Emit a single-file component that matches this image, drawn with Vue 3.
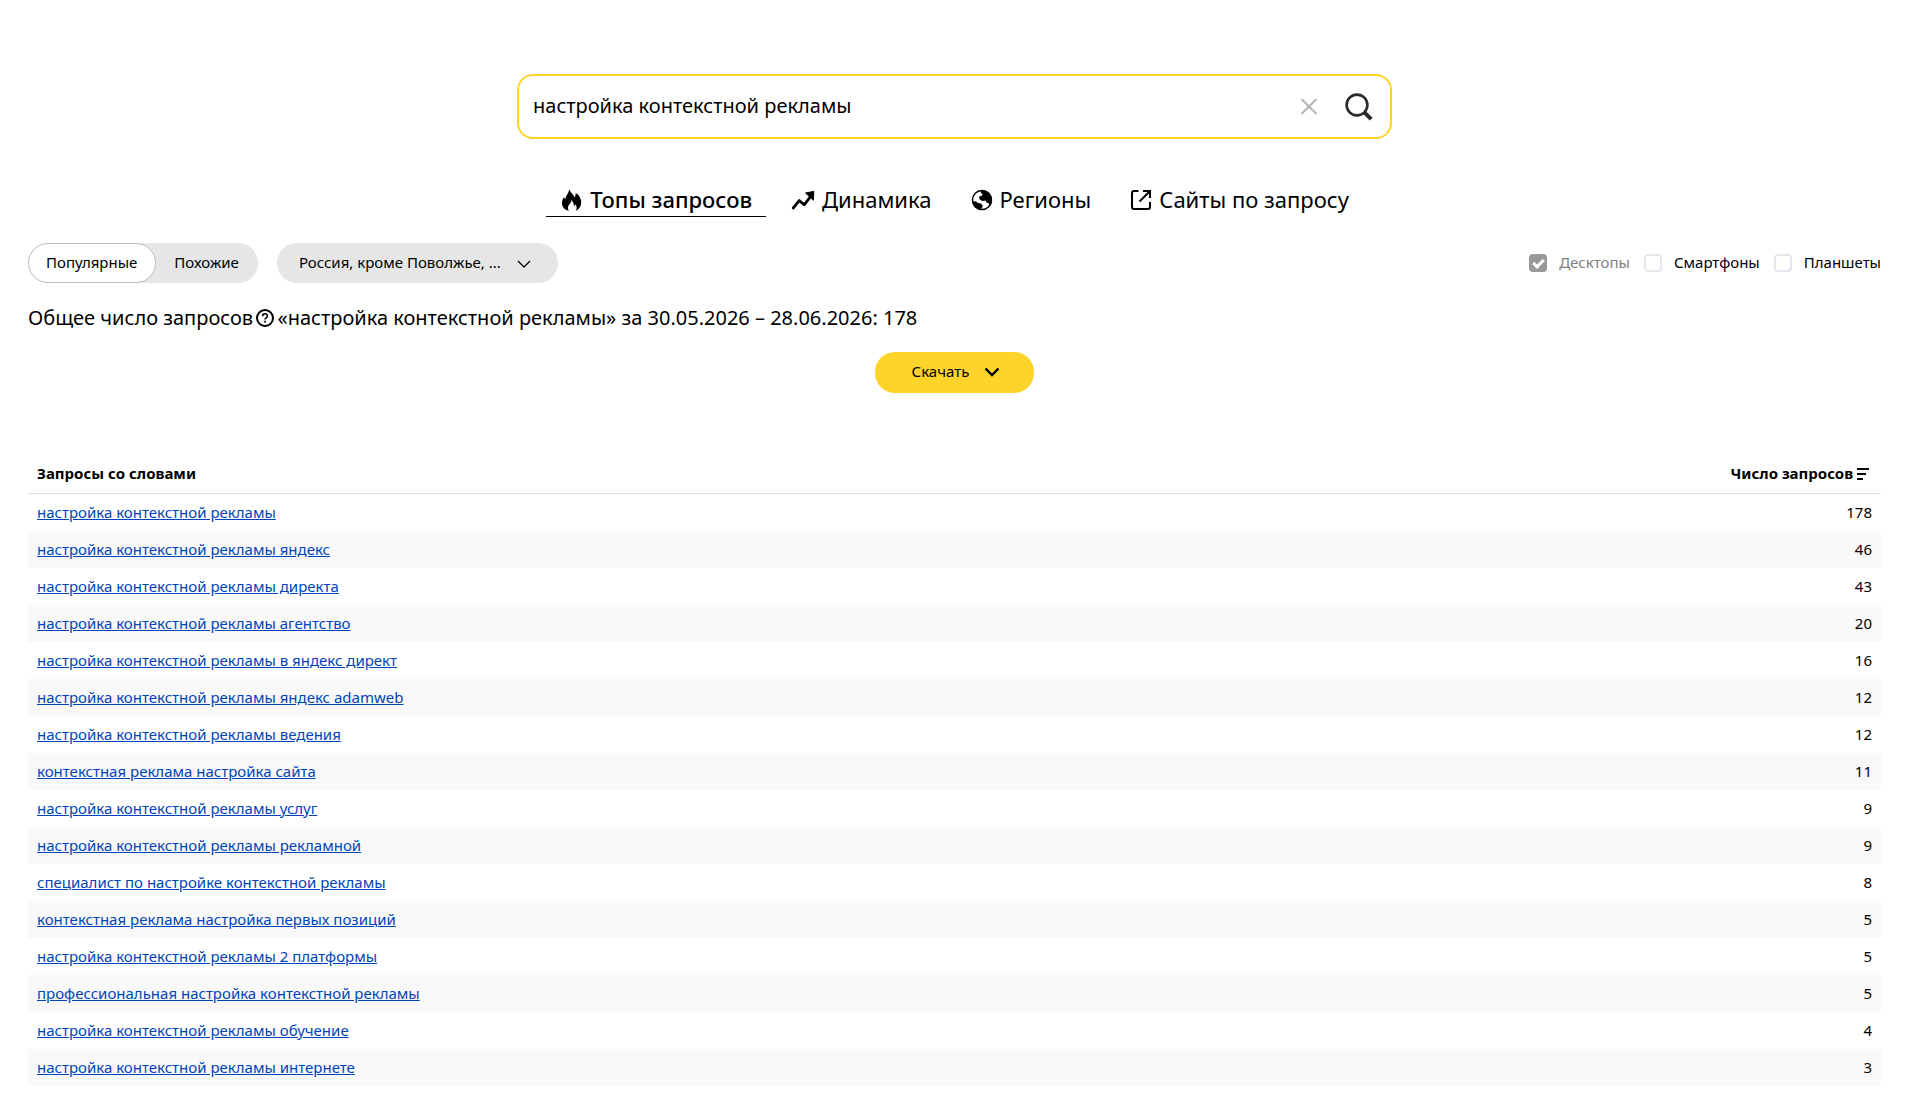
<template>
  <main class="page">
    <form class="search" role="search" @submit.prevent>
      <input v-model="query" class="search-input" type="text" aria-label="Запрос">
      <button class="icon-button clear" type="button" aria-label="Очистить" @click="query = ''">
        <svg width="16" height="16" viewBox="0 0 16 16">
          <path d="M.5 0l15 15M15.500 0L.5 15" fill="none" stroke="#b3b3b3" stroke-width="2" />
        </svg>
      </button>
      <button class="icon-button" type="submit" aria-label="Найти">
        <svg width="28" height="28" viewBox="0 0 28 28" fill="none" stroke="#2b2b2b">
          <circle cx="12" cy="12" r="10.4" stroke-width="2.6" />
          <path d="M19.8 19.8l6.4 6.4" stroke-width="4" />
        </svg>
      </button>
    </form>

    <nav class="tabs">
      <a
        v-for="tab in tabs"
        :key="tab.id"
        href="#"
        class="tab"
        :class="{ active: tab.id === activeTab }"
        @click.prevent="activeTab = tab.id"
      >
        <svg v-if="tab.id === 'top'" class="tab-icon" viewBox="0 0 22 22">
          <path d="M8.2 0C8.800 3 12.400 4.800 13.600 8.400c.9-.9 1.200-2.400 1-4.400 3.400 1.400 5.600 5.600 5.600 9.600 0 3.800-2 7-5.600 8.400 1.600-2.400 1.300-4.900-.1-6.700-.5 1-1 1.500-1.700 1.800.2-2.300-.7-4.300-2.400-6.100-.1 2.200-1.200 3.300-2.200 4.600-1.500 2-1.700 4.300-.3 6.400C3.300 20.800 1 17.900 1 14.100c0-2.700 1-4.400 2.100-6.100.2 1 .6 1.600 1.300 2.200C4.600 6.200 8.200 4.200 8.200 0z" />
        </svg>
        <svg v-else-if="tab.id === 'dynamics'" class="tab-icon wide" viewBox="0 0 24 22">
          <path d="M2.200 19l6-7.400 5 4.200L20 6.800" fill="none" stroke="#000" stroke-width="2.800" stroke-linecap="round" stroke-linejoin="round" />
          <path d="M14.600 4L22.800 2.400l-.4 8.800z" stroke="#000" stroke-linejoin="round" />
        </svg>
        <svg v-else-if="tab.id === 'regions'" class="tab-icon" viewBox="0 0 22 22">
          <circle cx="11" cy="11" r="9.500" fill="none" stroke="#000" stroke-width="1.500" />
          <path d="M10.200 1.200c6.200-.4 10.800 4 10.800 9.800 0 2.600-.9 4.800-2.400 6.500l-.9-3.200-2.500-.9-.5-1.900-3.200.5-2.500-1.200-1.100-2.200 1-1.600 2.100-.3.600-1.800-1.900-.8z" />
          <path d="M1.200 12.400l3.800-.2 1.400 1.600 3.400.6 1.900 2-.4 2.200-2 1.800C5.200 20.400 1.800 17 1.200 12.400z" />
        </svg>
        <svg v-else class="tab-icon" viewBox="0 0 22 22" fill="none" stroke="#000" stroke-width="2">
          <path d="M8.500 2H4a2 2 0 0 0-2 2v14a2 2 0 0 0 2 2h14a2 2 0 0 0 2-2v-5M13 2h7v7M20 2L9.500 12.500" />
        </svg>
        {{ tab.title }}
      </a>
    </nav>

    <div class="filters">
      <div class="switcher" role="radiogroup" aria-label="Тип запросов">
        <label v-for="mode in modes" :key="mode" class="mode" :class="{ checked: mode === activeMode }">
          <input v-model="activeMode" type="radio" name="mode" :value="mode">
          {{ mode }}
        </label>
      </div>

      <div class="region">
        <select v-model="region" class="region-select" aria-label="Регион">
          <option>Россия, кроме Поволжье, ...</option>
        </select>
        <svg class="region-arrow" width="14" height="8" viewBox="0 0 14 8">
          <path d="M1 1l6 6 6-6" fill="none" stroke="#000" stroke-width="1.300" />
        </svg>
      </div>

      <div class="devices">
        <label v-for="device in devices" :key="device.title" class="device" :class="{ disabled: device.disabled }">
          <input v-model="device.checked" type="checkbox" :disabled="device.disabled">
          <span>{{ device.title }}</span>
        </label>
      </div>
    </div>

    <p class="total">
      Общее число запросов
      <svg class="hint" width="18" height="18" viewBox="0 0 18 18" fill="none" stroke="#000">
        <circle cx="9" cy="9" r="8" stroke-width="2" />
        <path d="M6.600 7.200c0-1.500 1-2.400 2.400-2.400s2.400.9 2.400 2.100c0 1.600-2.300 1.700-2.300 3.500" stroke-width="1.600" />
        <path d="M9.100 11.700v1.700" stroke-width="1.800" />
      </svg>
      «настройка контекстной рекламы» за 30.05.2026 – 28.06.2026: 178
    </p>

    <button class="download" type="button">
      <span>Скачать</span>
      <svg width="16" height="10" viewBox="0 0 16 10">
        <path d="M1.500 1.500L8 8l6.500-6.500" fill="none" stroke="#000" stroke-width="2.400" />
      </svg>
    </button>

    <table class="queries">
      <thead>
        <tr>
          <th>Запросы со словами</th>
          <th class="count">
            Число запросов
            <svg class="sort" width="12" height="12" viewBox="0 0 12 12">
              <path d="M0 1h12M0 6h9M0 11h6" stroke="#000" stroke-width="2" />
            </svg>
          </th>
        </tr>
      </thead>
      <tbody>
        <tr v-for="row in rows" :key="row.text">
          <td><a href="#" @click.prevent="query = row.text">{{ row.text }}</a></td>
          <td class="count">{{ row.count }}</td>
        </tr>
      </tbody>
    </table>
  </main>
</template>

<script setup>
import { ref } from 'vue'

const query = ref('настройка контекстной рекламы')
const activeTab = ref('top')
const activeMode = ref('Популярные')
const region = ref('Россия, кроме Поволжье, ...')

const tabs = [
  { id: 'top', title: 'Топы запросов' },
  { id: 'dynamics', title: 'Динамика' },
  { id: 'regions', title: 'Регионы' },
  { id: 'sites', title: 'Сайты по запросу' }
]

const modes = ['Популярные', 'Похожие']

const devices = ref([
  { title: 'Десктопы', checked: true, disabled: true },
  { title: 'Смартфоны', checked: false, disabled: false },
  { title: 'Планшеты', checked: false, disabled: false }
])

const rows = [
  { text: 'настройка контекстной рекламы', count: 178 },
  { text: 'настройка контекстной рекламы яндекс', count: 46 },
  { text: 'настройка контекстной рекламы директа', count: 43 },
  { text: 'настройка контекстной рекламы агентство', count: 20 },
  { text: 'настройка контекстной рекламы в яндекс директ', count: 16 },
  { text: 'настройка контекстной рекламы яндекс adamweb', count: 12 },
  { text: 'настройка контекстной рекламы ведения', count: 12 },
  { text: 'контекстная реклама настройка сайта', count: 11 },
  { text: 'настройка контекстной рекламы услуг', count: 9 },
  { text: 'настройка контекстной рекламы рекламной', count: 9 },
  { text: 'специалист по настройке контекстной рекламы', count: 8 },
  { text: 'контекстная реклама настройка первых позиций', count: 5 },
  { text: 'настройка контекстной рекламы 2 платформы', count: 5 },
  { text: 'профессиональная настройка контекстной рекламы', count: 5 },
  { text: 'настройка контекстной рекламы обучение', count: 4 },
  { text: 'настройка контекстной рекламы интернете', count: 3 }
]
</script>

<style>
body {
  margin: 0;
  background: #fff;
}
</style>

<style scoped>
.page {
  display: flex;
  flex-direction: column;
  padding: 74px 30px 0 28px;
  font-family: "Noto Sans", "Open Sans", sans-serif;
  font-size: 15px;
  line-height: 20px;
  color: #000;
}

button,
input,
select {
  font: inherit;
  color: inherit;
}

.search {
  display: flex;
  align-items: center;
  align-self: center;
  box-sizing: border-box;
  width: 100%;
  max-width: 875px;
  height: 65px;
  padding: 0 17px 0 14px;
  border: 2px solid #fed42b;
  border-radius: 16px;
}

.search-input {
  flex: 1;
  min-width: 0;
  padding: 0 0 2px;
  border: none;
  outline: none;
  background: none;
  font-size: 20px;
  line-height: 28px;
}

.icon-button {
  display: flex;
  padding: 0;
  border: none;
  background: none;
  cursor: pointer;
}

.clear {
  margin-right: 28px;
}

.tabs {
  display: flex;
  align-self: center;
  gap: 10px;
  margin-top: 44px;
}

.tab {
  display: flex;
  align-items: center;
  gap: 7px;
  padding: 0 14px 0 15px;
  border-bottom: 1px solid transparent;
  font-size: 22px;
  line-height: 33px;
  color: #000;
  text-decoration: none;
}

.tab.active {
  border-color: #000;
  font-weight: 500;
}

.tab-icon {
  width: 22px;
  height: 22px;
}

.tab-icon.wide {
  width: 24px;
}

.filters {
  display: flex;
  align-items: center;
  gap: 19px;
  margin-top: 26px;
}

.switcher {
  display: flex;
  border-radius: 20px;
  background: #e6e6e6;
}

.mode {
  display: flex;
  align-items: center;
  box-sizing: border-box;
  height: 40px;
  padding: 0 18px 2px 17px;
  border: 1px solid transparent;
  border-radius: 20px;
  cursor: pointer;
}

.mode.checked {
  border-color: #bfbfbf;
  background: #fff;
}

.mode input {
  position: absolute;
  opacity: 0;
  margin: 0;
}

.region {
  position: relative;
  display: flex;
}

.region-select {
  appearance: none;
  width: 281px;
  height: 40px;
  padding: 0 48px 2px 22px;
  border: none;
  border-radius: 20px;
  background: #e6e6e6;
}

.region-arrow {
  position: absolute;
  top: 17px;
  right: 27px;
  pointer-events: none;
}

.devices {
  display: flex;
  gap: 14px;
  margin-left: auto;
}

.device {
  display: flex;
  align-items: center;
  gap: 12px;
}

.device span {
  padding-bottom: 2px;
}

.device.disabled {
  color: #808080;
}

.device input {
  appearance: none;
  display: grid;
  place-items: center;
  box-sizing: border-box;
  width: 18px;
  height: 18px;
  margin: 0;
  border: 2px solid #e6e6ef;
  border-radius: 4px;
}

.device input:checked {
  border-color: #999;
  background: #999;
}

.device input:checked::before {
  content: "";
  width: 4px;
  height: 8px;
  margin-bottom: 2px;
  border: solid #fff;
  border-width: 0 3px 3px 0;
  transform: rotate(45deg);
}

.total {
  margin: 21px 0 0;
  font-size: 20px;
  line-height: 28px;
}

.hint {
  margin: 0 -2px;
  vertical-align: -2px;
}

.download {
  display: flex;
  align-items: center;
  align-self: center;
  gap: 15px;
  height: 41px;
  margin-top: 20px;
  padding: 0 34px 2px 37px;
  border: none;
  border-radius: 20px;
  background: #fed42b;
  cursor: pointer;
}

.download span {
  padding-bottom: 2px;
}

.queries {
  width: 100%;
  margin-top: 62px;
  border-collapse: separate;
  border-spacing: 0;
}

.queries th,
.queries td {
  box-sizing: border-box;
  height: 37px;
  padding: 0 9px 2px;
  text-align: left;
}

.queries th {
  height: 39px;
  border-bottom: 1px solid #dcdcdc;
  font-weight: 700;
}

.queries .count {
  text-align: right;
}

.queries th.count {
  padding-right: 12px;
}

.sort {
  vertical-align: -1px;
}

.queries tbody tr:nth-child(even) {
  background: #f9f9f9;
}

.queries a {
  color: #04b;
  text-decoration: underline;
}
</style>
